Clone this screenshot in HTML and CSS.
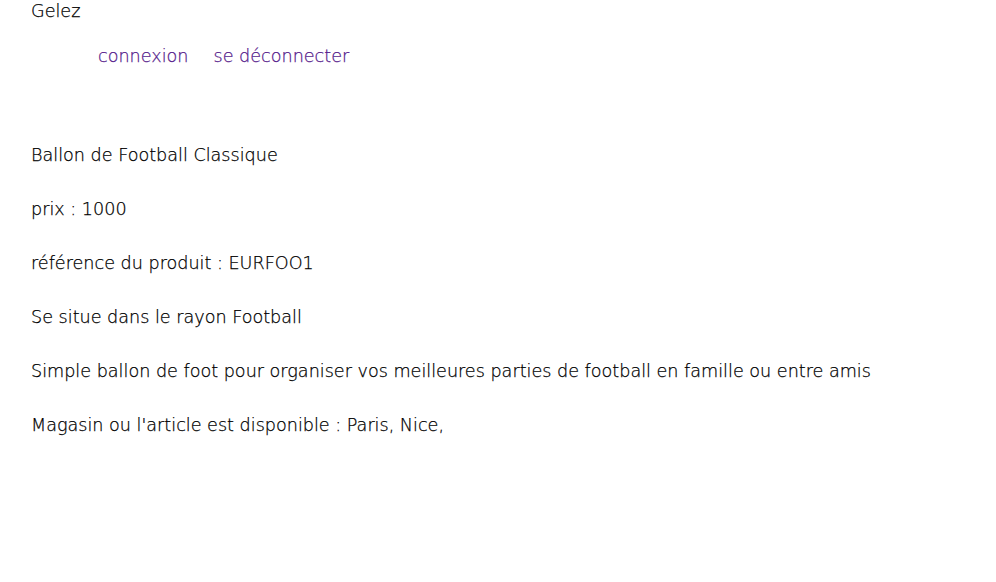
FILE: index.html
```html
<!DOCTYPE html>
<html lang="fr">
<head>
<meta charset="utf-8">
<title>Gelez</title>
<link rel="stylesheet" href="styles.css">
</head>
<body>
<header class="header">
  <div class="brand">Gelez</div>
  <nav class="nav">
    <a class="nav-link" href="#">connexion</a>
    <a class="nav-link" href="#">se déconnecter</a>
  </nav>
</header>
<main class="product">
  <p class="line">Ballon de Football Classique</p>
  <p class="line">prix : 1000</p>
  <p class="line">référence du produit : EURFOO1</p>
  <p class="line">Se situe dans le rayon Football</p>
  <p class="line">Simple ballon de foot pour organiser vos meilleures parties de football en famille ou entre amis</p>
  <p class="line">Magasin ou l'article est disponible : Paris, Nice,</p>
</main>
</body>
</html>
```
FILE: styles.css
```css
html, body {
  margin: 0;
  padding: 0;
  background: #fff;
}
body {
  font-family: "DejaVu Sans", "Open Sans", sans-serif;
  font-weight: 200;
  font-size: 17.6px;
  color: #000;
  padding-left: 31px;
  -webkit-text-stroke: 0.25px currentColor;
}
.header {
  display: flex;
  flex-direction: column;
}
.brand {
  line-height: 22px;
}
.nav {
  display: flex;
  gap: 25px;
  padding-left: 67px;
  margin-top: 23px;
  line-height: 22px;
}
.nav-link {
  color: #551a8b;
  text-decoration: none;
}
.product {
  display: flex;
  flex-direction: column;
  gap: 32px;
  margin-top: 77px;
}
.line {
  margin: 0;
  line-height: 22px;
}
```
